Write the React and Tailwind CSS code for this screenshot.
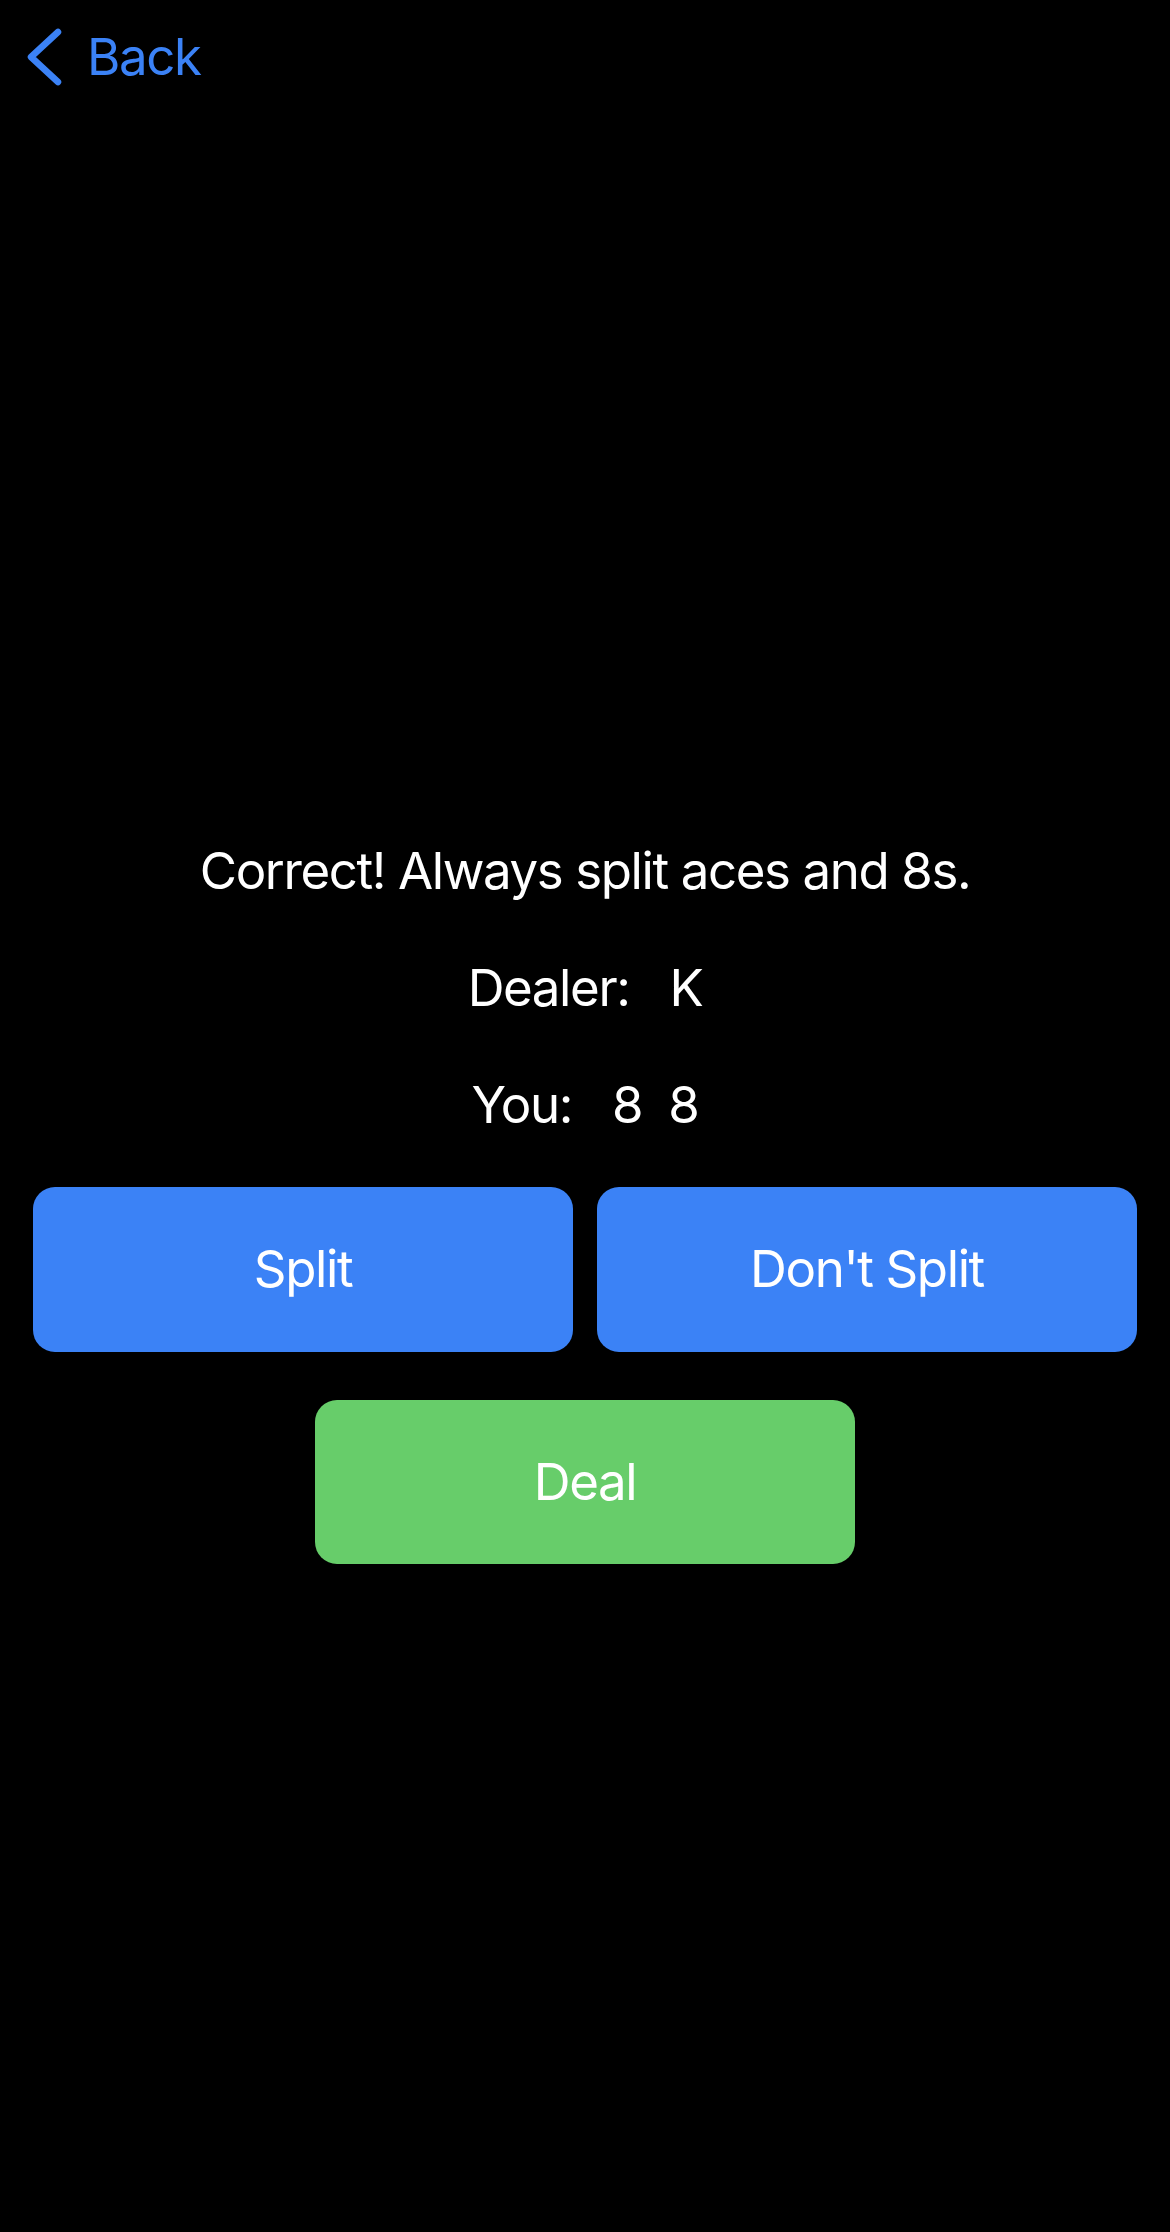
export default function App() {
  const font = { fontFamily: 'Inter, "Noto Sans", sans-serif' };
  return (
    <div className="min-h-[2232px] w-full bg-black text-white" style={font}>
      <div className="flex items-center pl-[26px] pt-[26px]">
        <svg width="36" height="60" viewBox="0 0 36 60" fill="none">
          <path d="M32 5 L5 30 L32 55" stroke="#3b82f6" strokeWidth="6.5" strokeLinecap="round" strokeLinejoin="round" />
        </svg>
        <span className="ml-[25px] text-[51px] leading-[61px] tracking-[-1.4px] text-[#3b82f6]">Back</span>
      </div>
      <div className="mt-[753px] flex flex-col items-center text-[51px] leading-[61px] tracking-[-1.4px]">
        <div>Correct! Always split aces and 8s.</div>
        <div className="mt-[56px] flex gap-[40px]">
          <span>Dealer:</span>
          <span>K</span>
        </div>
        <div className="mt-[56px] flex gap-[40px]">
          <span>You:</span>
          <span className="flex gap-[26px]">
            <span>8</span>
            <span>8</span>
          </span>
        </div>
      </div>
      <div className="mt-[52px] px-[33px] grid grid-cols-2 gap-[24px]">
        <button className="h-[165px] rounded-[22px] bg-[#3b82f6] text-[51px] tracking-[-1.4px] text-white">Split</button>
        <button className="h-[165px] rounded-[22px] bg-[#3b82f6] text-[51px] tracking-[-1.4px] text-white">Don't Split</button>
      </div>
      <div className="mt-[48px] flex justify-center">
        <button className="h-[164px] w-[540px] rounded-[22px] bg-[#67cd6a] text-[51px] tracking-[-1.4px] text-white">Deal</button>
      </div>
    </div>
  );
}
